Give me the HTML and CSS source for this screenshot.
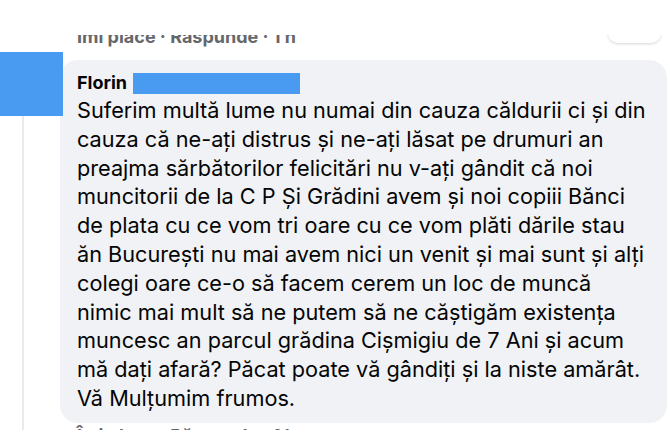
FILE: index.html
```html
<!DOCTYPE html>
<html lang="ro">
<head>
<meta charset="utf-8">
<title>Comentariu</title>
<link rel="stylesheet" href="styles.css">
</head>
<body>
<div class="viewport">
  <div class="prev-meta">
    <span>Îmi place · Răspunde · 1 h</span>
    <div class="pill"></div>
  </div>
  <div class="comment">
    <div class="avatar-col">
      <div class="avatar"></div>
      <div class="thread-line"></div>
    </div>
    <div class="comment-body">
      <div class="bubble">
        <div class="author"><span class="name">Florin</span><span class="redact"></span></div>
        <div class="text">Suferim multă lume nu numai din cauza căldurii ci și din<br>cauza că ne-ați distrus și ne-ați lăsat pe drumuri an<br>preajma sărbătorilor felicitări nu v-ați gândit că noi<br>muncitorii de la C P Și Grădini avem și noi copiii Bănci<br>de plata cu ce vom tri oare cu ce vom plăti dările stau<br>ăn București nu mai avem nici un venit și mai sunt și alți<br>colegi oare ce-o să facem cerem un loc de muncă<br>nimic mai mult să ne putem să ne căștigăm existența<br>muncesc an parcul grădina Cișmigiu de 7 Ani și acum<br>mă dați afară? Păcat poate vă gândiți și la niste amărât.<br>Vă Mulțumim frumos.</div>
      </div>
      <div class="meta">Îmi place · Răspunde · 1 h</div>
    </div>
  </div>
</div>
</body>
</html>
```

FILE: styles.css
```css
html, body {
  margin: 0;
  padding: 0;
  background: #ffffff;
}
body {
  font-family: Inter, "Liberation Sans", sans-serif;
  color: #050505;
  width: 670px;
  height: 447px;
  overflow: hidden;
}
.viewport {
  margin-top: 35px;
  height: 395px;
  overflow: hidden;
}
.prev-meta {
  position: relative;
  margin-top: -7px;
  height: 18px;
  line-height: 18px;
  padding-left: 77px;
  font-size: 18px;
  font-weight: 700;
  color: #65676b;
  white-space: nowrap;
}
.pill {
  position: absolute;
  right: 9px;
  top: -5px;
  width: 53px;
  height: 20px;
  border-radius: 10px;
  background: #ffffff;
  box-shadow: 0 1px 3px rgba(0, 0, 0, 0.16);
}
.comment {
  display: flex;
  margin-top: 6px;
}
.avatar-col {
  width: 60px;
  flex: 0 0 60px;
  display: flex;
  flex-direction: column;
}
.avatar {
  position: relative;
  z-index: 1;
  width: 63px;
  height: 64px;
  background: #489bf0;
}
.thread-line {
  flex: 1;
  width: 2px;
  margin-left: 22px;
  background: #e9eaed;
}
.comment-body {
  flex: 1;
  padding-top: 8px;
  padding-right: 3px;
}
.bubble {
  background: #f0f2f5;
  border-radius: 18px;
  padding: 12px 10px 10px 17px;
}
.author {
  height: 22px;
  line-height: 22px;
  font-size: 18px;
  font-weight: 700;
  display: flex;
  align-items: center;
}
.redact {
  display: inline-block;
  width: 167px;
  height: 21px;
  margin-left: 6px;
  background: #489bf0;
}
.text {
  margin-top: 2px;
  font-size: 21.7px;
  line-height: 28.8px;
  white-space: nowrap;
}
.meta {
  margin-top: 4px;
  padding-left: 17px;
  height: 18px;
  line-height: 18px;
  font-size: 18px;
  font-weight: 700;
  color: #65676b;
  white-space: nowrap;
}
```
